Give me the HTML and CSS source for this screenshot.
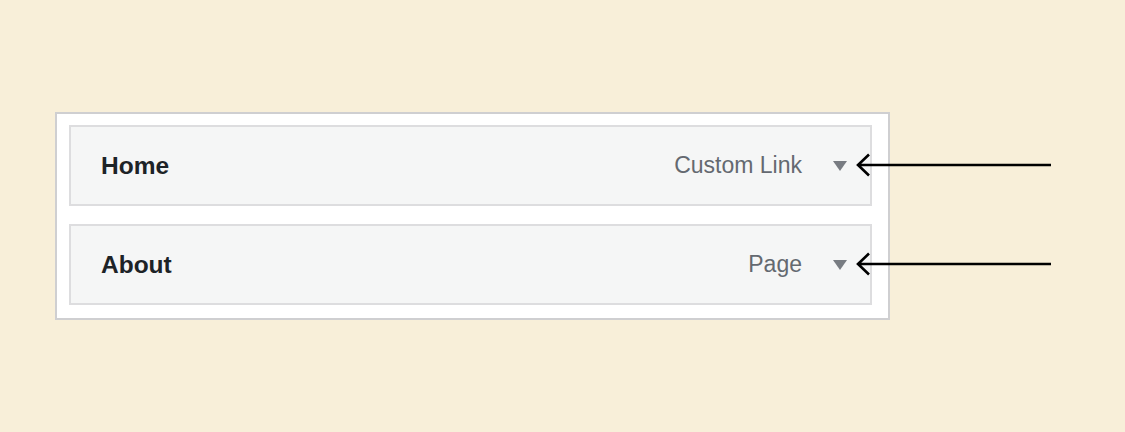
FILE: index.html
```html
<!DOCTYPE html>
<html>
<head>
<meta charset="utf-8">
<link rel="stylesheet" href="styles.css">
</head>
<body>
<div class="stage">
  <div class="menu">
    <div class="item">
      <span class="title">Home</span>
      <span class="type">Custom Link</span>
      <span class="toggle"></span>
      <svg class="arrow" width="200" height="26" viewBox="0 0 200 26"><path d="M196 13H3M14 2.5L3 13l11 10.5" fill="none" stroke="#000" stroke-width="2.6"/></svg>
    </div>
    <div class="item">
      <span class="title">About</span>
      <span class="type">Page</span>
      <span class="toggle"></span>
      <svg class="arrow" width="200" height="26" viewBox="0 0 200 26"><path d="M196 13H3M14 2.5L3 13l11 10.5" fill="none" stroke="#000" stroke-width="2.6"/></svg>
    </div>
  </div>
</div>
</body>
</html>
```
FILE: styles.css
```css
html, body {
  margin: 0;
  padding: 0;
  background: #f8efd9;
  font-family: "Liberation Sans", Arial, sans-serif;
}
.stage {
  width: 1125px;
  height: 432px;
  padding: 112px 0 0 55px;
  box-sizing: border-box;
}
.menu {
  width: 835px;
  box-sizing: border-box;
  background: #fff;
  border: 2px solid #cfcfd1;
  padding: 11px 16px 13px 12px;
  display: flex;
  flex-direction: column;
  gap: 18px;
}
.item {
  position: relative;
  height: 81px;
  box-sizing: border-box;
  background: #f5f6f6;
  border: 2px solid #dddddf;
  display: flex;
  align-items: center;
  padding: 0 23px 0 30px;
}
.title {
  font-weight: bold;
  font-size: 24.5px;
  color: #1d2327;
  flex: 1;
}
.type {
  font-size: 23px;
  color: #646970;
  margin-right: 31px;
}
.toggle {
  width: 0;
  height: 0;
  border-left: 7.5px solid transparent;
  border-right: 7.5px solid transparent;
  border-top: 10px solid #787c82;
  margin-top: 1px;
}
.arrow {
  position: absolute;
  left: 784px;
  top: 25px;
}
```
